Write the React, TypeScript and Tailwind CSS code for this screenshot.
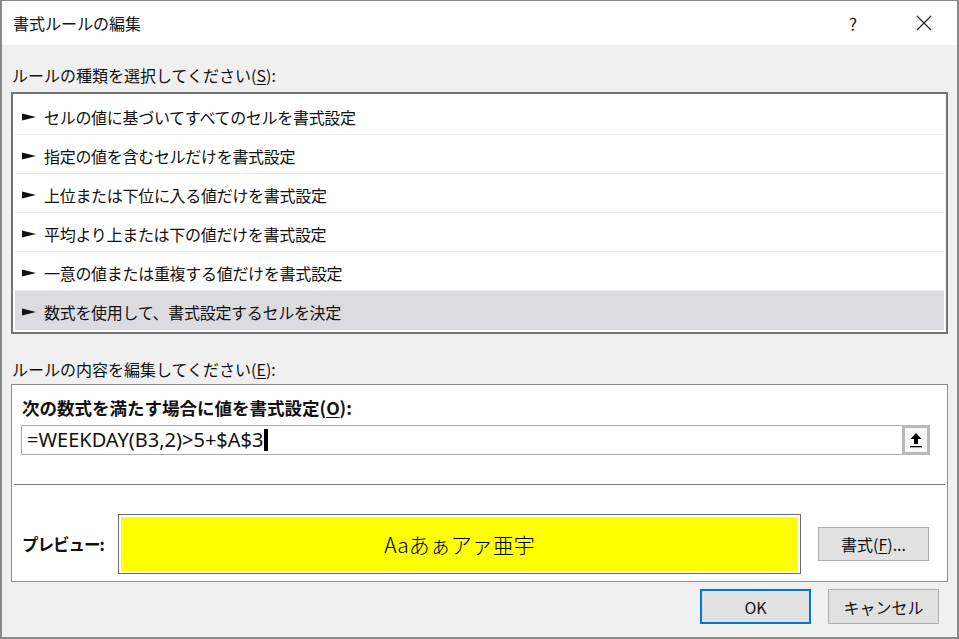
import React from "react";

const FONT = { fontFamily: '"Noto Sans CJK JP", "Noto Sans", sans-serif' };

const ruleTypes = [
  "セルの値に基づいてすべてのセルを書式設定",
  "指定の値を含むセルだけを書式設定",
  "上位または下位に入る値だけを書式設定",
  "平均より上または下の値だけを書式設定",
  "一意の値または重複する値だけを書式設定",
  "数式を使用して、書式設定するセルを決定",
];

function Pointer() {
  return (
    <svg width="14" height="8" viewBox="0 0 14 8" className="shrink-0">
      <polygon points="0,0.5 14,4 0,7.5" fill="#111" />
    </svg>
  );
}

function CollapseIcon() {
  return (
    <svg width="14" height="16" viewBox="0 0 14 16">
      <polygon points="7,1 1.5,7 5,7 5,12 9,12 9,7 12.5,7" fill="#000" />
      <rect x="1" y="14" width="12" height="1.3" fill="#000" />
    </svg>
  );
}

export default function App() {
  return (
    <div
      className="w-[959px] h-[639px] flex flex-col bg-[#f0f0f0] border-l-2 border-r-2 border-b-2 border-t border-[#8a8a8a] text-[#111] overflow-hidden"
      style={FONT}
    >
      {/* title bar */}
      <div className="h-[44px] shrink-0 bg-white flex items-center pl-[11px]">
        <span className="text-[16px] leading-none">書式ルールの編集</span>
        <span className="ml-auto text-[17px] leading-none text-[#222] mr-[59px]">?</span>
        <svg width="16" height="16" viewBox="0 0 16 16" className="mr-[25px]">
          <path d="M1 1 L15 15 M15 1 L1 15" stroke="#222" strokeWidth="1.2" />
        </svg>
      </div>

      {/* body */}
      <div className="flex-1 flex flex-col px-[9px] pt-[17px]">
        <div className="h-[26px] leading-[26px] text-[16px] pl-[1px]">
          ルールの種類を選択してください(<span className="underline underline-offset-2">S</span>):
        </div>

        {/* rule type list */}
        <div className="mt-[4px] h-[242px] border-2 border-[#727272] bg-white p-[2px] flex flex-col">
          {ruleTypes.map((t, i) => (
            <div
              key={t}
              className={
                "h-[39px] shrink-0 flex items-center pt-[3px] pl-[7px] gap-[8px] text-[16px] " +
                (i === ruleTypes.length - 1
                  ? "bg-[#dcdce0]"
                  : "border-b border-[#ececec]")
              }
            >
              <Pointer />
              <span className="whitespace-nowrap tracking-[-0.3px]">{t}</span>
            </div>
          ))}
        </div>

        <div className="mt-[22px] h-[26px] leading-[26px] text-[16px] pl-[1px]">
          ルールの内容を編集してください(<span className="underline underline-offset-2">E</span>):
        </div>

        {/* rule description group */}
        <div className="mt-[2px] h-[198px] border border-[#8c8c8c] bg-white flex flex-col pt-[10px]">
          <div className="h-[26px] leading-[26px] text-[17.5px] font-bold pl-[10px] whitespace-nowrap">
            次の数式を満たす場合に値を書式設定(<span className="underline underline-offset-2">O</span>):
          </div>

          <div className="mt-[4px] ml-[9px] mr-[17px] h-[30px] flex">
            <div className="flex-1 border border-[#acacac] border-r-0 flex items-center pl-[5px]">
              <span
                className="text-[20px] leading-none whitespace-nowrap"
                style={{ fontFamily: '"Noto Sans", sans-serif' }}
              >
                =WEEKDAY(B3,2)&gt;5+$A$3
              </span>
              <span className="ml-[1px] w-[4px] h-[22px] bg-black" />
            </div>
            <div className="w-[28px] h-[30px] border-[3px] border-[#b9b9b9] bg-[#f7f7f7] flex items-center justify-center">
              <CollapseIcon />
            </div>
          </div>

          <div className="mt-[29px] mx-[2px] h-px bg-[#777]" />

          <div className="mt-[29px] flex items-center pl-[10px]">
            <div className="w-[96px] text-[16.5px] font-bold whitespace-nowrap tracking-[-1px]">プレビュー:</div>
            <div className="w-[683px] h-[60px] border border-[#6e6e6e] bg-white p-[2px]">
              <div className="w-full h-full bg-[#ffff00] flex items-center justify-center">
                <span className="text-[21px] font-light leading-none text-black whitespace-nowrap">
                  Aaあぁアァ亜宇
                </span>
              </div>
            </div>
            <button className="ml-[17px] w-[111px] h-[34px] border border-[#adadad] bg-[#e1e1e1] text-[16px] leading-none">
              書式(<span className="underline underline-offset-2">F</span>)...
            </button>
          </div>
        </div>

        {/* dialog buttons */}
        <div className="mt-[7px] flex justify-end gap-[17px] pr-[9px]">
          <button className="w-[111px] h-[35px] border-2 border-[#0078d7] bg-[#e1e1e1] text-[16px] leading-none">
            OK
          </button>
          <button className="w-[111px] h-[35px] border border-[#adadad] bg-[#e1e1e1] text-[16px] leading-none">
            キャンセル
          </button>
        </div>
      </div>
    </div>
  );
}
